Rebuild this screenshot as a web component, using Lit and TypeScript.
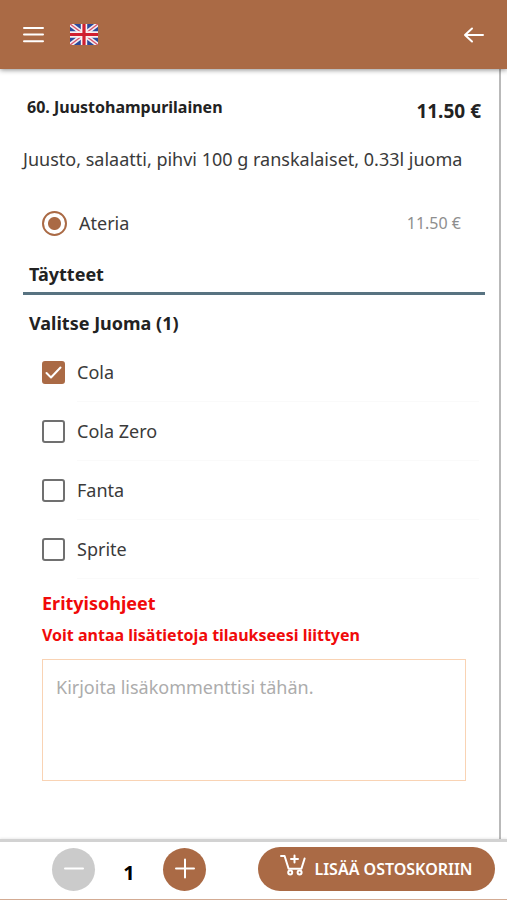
import { LitElement, html, svg, css, nothing } from "lit";
import { customElement, state } from "lit/decorators.js";

const menuIcon = svg`<svg class="icon" viewBox="0 0 24 24" width="24" height="24" aria-hidden="true">
  <path d="M3 5H22M3 11.5H22M3 18.2H22" />
</svg>`;

const backIcon = svg`<svg class="icon" viewBox="0 0 24 24" width="24" height="24" aria-hidden="true">
  <path d="M21 12H3M10 5.5L3 12L10 18.5" />
</svg>`;

const flagIcon = svg`<svg viewBox="0 0 28 21" width="28" height="21" aria-hidden="true">
  <rect width="28" height="21" fill="#2b4a9b" />
  <path d="M0 0L28 21M28 0L0 21" stroke="#f3eef2" stroke-width="4.6" />
  <path d="M0 0L28 21M28 0L0 21" stroke="#d8536a" stroke-width="1.4" />
  <path d="M14 0V21M0 10.5H28" stroke="#f8f1f2" stroke-width="6.4" />
  <path d="M14 0V21M0 10.5H28" stroke="#d01f30" stroke-width="3.2" />
</svg>`;

const cartIcon = svg`<svg viewBox="0 0 26 22" width="26" height="22" fill="none" stroke="#fff" stroke-width="2"
    stroke-linecap="round" stroke-linejoin="round" aria-hidden="true">
  <path d="M1 2H4.6L8.6 14.8H21.4L24.6 4.5" />
  <path d="M14.5 1.5V8.5M11 5H18" />
  <circle cx="10.2" cy="18.4" r="2" />
  <circle cx="19.6" cy="18.4" r="2" />
</svg>`;

@customElement("app-root")
export class AppRoot extends LitElement {
  @state() private quantity = 1;
  @state() private drink = "Cola";

  private drinks = ["Cola", "Cola Zero", "Fanta", "Sprite"];

  static styles = css`
    :host {
      display: flex;
      flex-direction: column;
      min-height: 100vh;
      background: #fff;
      color: #222;
      font-family: "Noto Sans", "Open Sans", sans-serif;
      font-size: 18px;
      line-height: 28px;
    }
    * {
      box-sizing: border-box;
    }
    button {
      font: inherit;
      color: #fff;
      border: 0;
      padding: 0;
      background: none;
      cursor: pointer;
    }
    svg {
      display: block;
    }
    .icon {
      fill: none;
      stroke: #fff;
      stroke-width: 2;
      stroke-linecap: round;
      stroke-linejoin: round;
    }
    header {
      position: sticky;
      top: 0;
      z-index: 1;
      display: flex;
      align-items: center;
      gap: 25px;
      height: 69px;
      padding: 0 21px;
      background: #aa6a45;
      box-shadow: 0 1px 5px rgba(0, 0, 0, 0.45);
    }
    .back {
      margin-left: auto;
    }
    main {
      flex: 1;
      margin-right: 6px;
      padding: 26px 14px 32px 23px;
      border-right: 2px solid #b9b9b9;
    }
    h1,
    h2,
    h3,
    p {
      margin: 0;
      font-size: 18px;
      font-weight: 700;
    }
    .title {
      display: flex;
      justify-content: space-between;
      padding: 0 4px;
    }
    h1 {
      font-size: 16px;
      line-height: 24px;
    }
    .total {
      font-weight: 700;
      font-size: 19px;
      line-height: 32px;
    }
    .description {
      margin-top: 18px;
      font-weight: 400;
      color: #3a3a3a;
    }
    .row {
      display: flex;
      align-items: center;
      color: #3a3a3a;
    }
    .meal {
      height: 46px;
      margin-top: 27px;
      padding: 0 24px 0 19px;
    }
    .meal input {
      appearance: none;
      width: 25px;
      height: 25px;
      margin: 0 12px 0 0;
      border: 2px solid #aa6a45;
      border-radius: 50%;
    }
    .meal input:checked {
      background: radial-gradient(circle, #aa6a45 6px, transparent 7px);
    }
    .price {
      margin-left: auto;
      font-size: 16px;
      color: #8e8e8e;
    }
    h2 {
      margin-top: 14px;
      padding: 0 6px 4px;
      border-bottom: 3px solid #587381;
    }
    fieldset {
      min-width: 0;
      margin: 0;
      padding: 0;
      border: 0;
    }
    legend {
      padding: 14px 6px 6px;
      font-weight: 700;
    }
    .choice {
      height: 59px;
      padding: 0 6px 0 19px;
    }
    .box {
      display: grid;
      margin-right: 12px;
    }
    .box > * {
      grid-area: 1 / 1;
    }
    .box input {
      appearance: none;
      width: 23px;
      height: 23px;
      margin: 0;
      border: 2px solid #707070;
      border-radius: 3px;
    }
    .box input:checked {
      background: #aa6a45;
      border-color: #aa6a45;
    }
    .box svg {
      pointer-events: none;
    }
    .choice-label {
      flex: 1;
      line-height: 58px;
      border-bottom: 1px solid #fafafa;
    }
    .notes {
      display: flex;
      flex-direction: column;
      padding: 10px 19px 0;
      color: #f00a0a;
    }
    .notes label {
      margin: 6px 0 12px;
      font-size: 16px;
      line-height: 24px;
      font-weight: 700;
    }
    textarea {
      height: 122px;
      padding: 13px;
      border: 1px solid #f9d3b4;
      outline: 0;
      resize: none;
      font: inherit;
      color: #3a3a3a;
    }
    textarea::placeholder {
      color: #acacac;
      opacity: 1;
    }
    footer {
      position: sticky;
      bottom: 0;
      display: flex;
      align-items: center;
      padding: 5px 12px 8px 52px;
      border-top: 3px solid #d2d2d2;
      border-bottom: 1px solid #d3ab93;
      background: #fff;
      box-shadow: 0 -1px 2px rgba(0, 0, 0, 0.08);
    }
    .round {
      display: grid;
      place-items: center;
      width: 43px;
      height: 43px;
      border-radius: 50%;
      background: #aa6a45;
    }
    .round:disabled {
      background: #cbcbcb;
    }
    output {
      width: 68px;
      padding-top: 8px;
      font-size: 20px;
      font-weight: 700;
      text-align: center;
      color: #000;
    }
    .add {
      display: flex;
      align-items: center;
      justify-content: center;
      gap: 8px;
      width: 237px;
      height: 44px;
      margin-left: auto;
      border-radius: 22px;
      background: #aa6a45;
      font-size: 16px;
      font-weight: 600;
    }
    .add svg {
      margin-bottom: 8px;
    }
  `;

  render() {
    return html`
      <header>
        <button aria-label="Valikko">${menuIcon}</button>
        <button aria-label="English">${flagIcon}</button>
        <button class="back" aria-label="Takaisin">${backIcon}</button>
      </header>
      <main>
        <div class="title">
          <h1>60. Juustohampurilainen</h1>
          <span class="total">11.50 €</span>
        </div>
        <p class="description">Juusto, salaatti, pihvi 100 g ranskalaiset, 0.33l juoma</p>
        <label class="row meal">
          <input type="radio" name="size" checked />
          <span>Ateria</span>
          <span class="price">11.50 €</span>
        </label>
        <h2>Täytteet</h2>
        <fieldset>
          <legend>Valitse Juoma (1)</legend>
          ${this.drinks.map(
            (name) => html`<label class="row choice">
              <span class="box">
                <input
                  type="checkbox"
                  .checked=${this.drink === name}
                  @change=${() => (this.drink = name)}
                />
                ${this.drink === name
                  ? html`<svg class="icon" viewBox="0 0 23 23" width="23" height="23" aria-hidden="true">
                      <path d="M4.5 12L9 16.5L18.5 6.5" />
                    </svg>`
                  : nothing}
              </span>
              <span class="choice-label">${name}</span>
            </label>`
          )}
        </fieldset>
        <section class="notes">
          <h3>Erityisohjeet</h3>
          <label for="comment">Voit antaa lisätietoja tilaukseesi liittyen</label>
          <textarea id="comment" placeholder="Kirjoita lisäkommenttisi tähän."></textarea>
        </section>
      </main>
      <footer>
        <button
          class="round"
          aria-label="Vähennä"
          ?disabled=${this.quantity === 1}
          @click=${() => this.quantity--}
        >
          <svg class="icon" viewBox="0 0 24 24" width="24" height="24" aria-hidden="true"><path d="M3 11.5H21" /></svg>
        </button>
        <output>${this.quantity}</output>
        <button class="round" aria-label="Lisää" @click=${() => this.quantity++}>
          <svg class="icon" viewBox="0 0 24 24" width="24" height="24" aria-hidden="true"><path d="M3 11.5H21M12 2.5V20.5" /></svg>
        </button>
        <button class="add">${cartIcon}<span>LISÄÄ OSTOSKORIIN</span></button>
      </footer>
    `;
  }
}
